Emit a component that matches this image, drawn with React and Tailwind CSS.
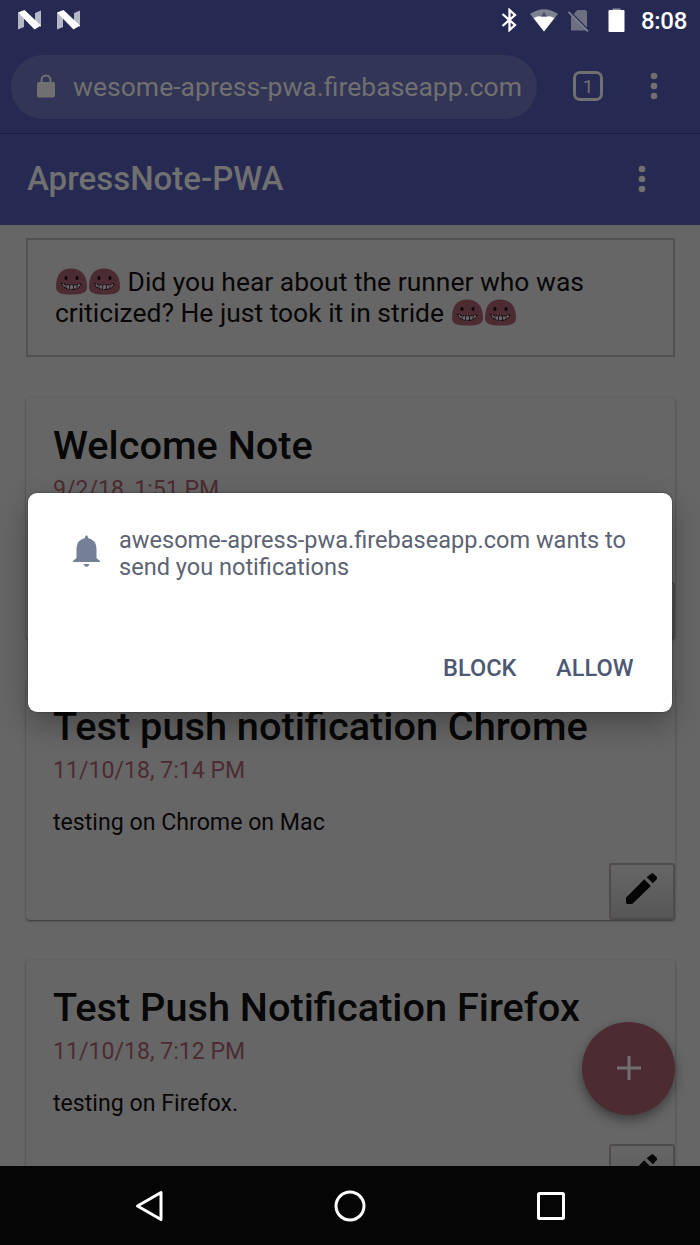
import React from "react";

function NougatIcon() {
  return (
    <svg width="25" height="20" viewBox="0 0 25 20">
      <path d="M1 2.5 L7 7.5 V17 L1 19.5 Z M24 0.5 V17 L18 12 V3 Z" fill="#b4b8c6" />
      <path d="M1 2.5 L7.5 0 L24 15.5 L17.5 19.5 Z" fill="#fff" />
    </svg>
  );
}

function StatusBar() {
  return (
    <div className="flex h-10 shrink-0 items-center pl-[17px] pr-[13px] text-white">
      <div className="flex gap-[14px]">
        <NougatIcon />
        <NougatIcon />
      </div>
      <svg className="ml-auto" width="16" height="24" viewBox="0 0 16 24" fill="none" stroke="#fff" strokeWidth="2.3">
        <path d="M1.5 6 L14 17 L8.5 22 V2 L14 7 L1.5 18" />
      </svg>
      <svg className="ml-[13px]" width="28" height="23" viewBox="0 0 28 23">
        <path d="M0 5 Q14 -4.5 28 5 L14 22.5 Z" fill="#7d808e" />
        <path d="M3.500 9 Q8 6.500 11 7.500 H17 Q20 6.500 24.500 9 L14 22.5 Z" fill="#fff" />
        <path d="M11 7.500 L14 3 L17 7.500 Z" fill="#4a4d68" />
      </svg>
      <svg className="ml-[10px]" width="22" height="23" viewBox="0 0 22 23">
        <path d="M9.5 1 H17 Q19 1 19 3 V21.5 H3 V8 Z" fill="#6d7080" />
        <path d="M2 3 L21.500 22.500" stroke="#262a52" strokeWidth="2.200" />
        <path d="M0.5 3 L20 22.5" stroke="#7d808e" strokeWidth="1.800" />
      </svg>
      <svg className="ml-[18px]" width="17" height="25" viewBox="0 0 17 25">
        <path d="M4.500 0.500 H12.500 V3 H4.500 Z" fill="#8d8f9b" />
        <rect x="0.500" y="2" width="16" height="22" rx="1" fill="#fff" />
      </svg>
      <span className="ml-4 mt-[2px] w-[46px] whitespace-nowrap text-[24px] font-medium leading-7 tracking-[-0.3px]">8:08</span>
    </div>
  );
}

function Dots() {
  return (
    <svg width="8" height="28" viewBox="0 0 8 28" fill="#707070">
      <circle cx="4" cy="4" r="3.300" />
      <circle cx="4" cy="14" r="3.300" />
      <circle cx="4" cy="24" r="3.300" />
    </svg>
  );
}

function BrowserBar() {
  return (
    <div className="flex h-[94px] shrink-0 items-start border-b border-[#1b1e40] pl-[11px] pt-[15px]">
      <div className="flex h-16 w-[526px] items-center overflow-hidden rounded-full bg-[#323556] pl-[26px]">
        <svg className="mb-[3px]" width="18" height="24" viewBox="0 0 18 24">
          <path d="M4.500 10 V6 a4.500 4.500 0 0 1 9 0 V10" fill="none" stroke="#707070" strokeWidth="2" />
          <rect x="0" y="8" width="18" height="15.500" rx="1.800" fill="#707070" />
        </svg>
        <span className="ml-[18px] whitespace-nowrap text-[26.550px] leading-8">wesome-apress-pwa.firebaseapp.com</span>
      </div>
      <div className="ml-9 mt-4 flex size-[30px] items-center justify-center rounded-[7px] border-[3px] border-[#707070] text-[19px] leading-none">1</div>
      <div className="ml-[47px] mt-[17px]">
        <Dots />
      </div>
    </div>
  );
}

function AppBar() {
  return (
    <div className="flex h-[91px] shrink-0 items-center pl-[27px] pr-[54px]">
      <h1 className="mt-[-2px] whitespace-nowrap text-[33px] font-medium leading-10">ApressNote-PWA</h1>
      <div className="mb-[2px] ml-auto">
        <Dots />
      </div>
    </div>
  );
}

function Grin() {
  return (
    <svg className="inline-block align-[-4px]" width="33" height="27" viewBox="0 0 33 27">
      <path d="M1 19 C1 7 6 0.500 16 0.500 C26 0.500 32 7 32 19 C32 25 27 26.500 16 26.500 C6 26.500 1 25 1 19 Z" fill="#4c2c32" />
      <path d="M6.500 15.500 Q16.500 18.500 26.500 15.500 Q24 21.500 16.500 21.500 Q9 21.500 6.500 15.500 Z" fill="#6c666c" stroke="#140c10" strokeWidth="1.200" strokeDasharray="1.600 1" />
      <path d="M11 16.500 V21 M14.500 17 V22 M18.500 17 V22 M22 16.500 V21" stroke="#2a1a1f" strokeWidth="1" />
      <ellipse cx="11" cy="10" rx="1.500" ry="2" fill="#08060a" />
      <ellipse cx="22" cy="10" rx="1.500" ry="2" fill="#08060a" />
    </svg>
  );
}

function Note({ title, date, body }) {
  return (
    <article className="flex h-[241px] shrink-0 flex-col rounded-[4px] pl-[27px] shadow-[0_1px_3px_rgba(0,0,0,0.3),0_1px_1px_rgba(0,0,0,0.2)]">
      <h2 className="mt-[23px] whitespace-nowrap text-[39.700px] font-medium leading-[50px] text-[#070707]">{title}</h2>
      <p className="mt-[5px] whitespace-nowrap text-[23.100px] leading-7 text-[#4c2c32]">{date}</p>
      <p className="mt-[24px] whitespace-nowrap text-[23.150px] leading-7 text-[#090708]">{body}</p>
      <div className="mt-auto flex h-[57px] w-[66px] items-center justify-center self-end rounded-[3px] border-2 border-[#4f4a4b] bg-linear-to-b from-[#666666] to-[#575757]">
        <svg className="mb-[7px] mr-px" width="31" height="31" viewBox="3 3 18 18" fill="#050505">
          <path d="M3 17.300 V20.200 Q3 21 3.800 21 H6.600 L17.400 10.600 L13.600 6.600 Z M17.400 3.600 Q18.400 2.800 19.200 3.600 L20.800 5.200 Q21.400 5.900 20.800 6.700 L18.600 9 L15 5.400 Z" />
        </svg>
      </div>
    </article>
  );
}

function Page() {
  return (
    <main className="relative flex h-[941px] shrink-0 flex-col gap-10 overflow-hidden bg-[#666666] pl-[26px] pr-[25px] pt-[13px]">
      <section className="mb-px h-[119px] shrink-0 whitespace-nowrap border-2 border-[#515151] pl-[27px] pt-[26px] text-[26.450px] leading-[31px] text-[#080607]">
        <div className="h-[31px]"><Grin /><Grin /> Did you hear about the runner who was</div>
        <div className="h-[31px]">criticized? He just took it in stride <Grin /><Grin /></div>
      </section>
      <Note title="Welcome Note" date="9/2/18, 1:51 PM" body="" />
      <Note title="Test push notification Chrome" date="11/10/18, 7:14 PM" body="testing on Chrome on Mac" />
      <Note title="Test Push Notification Firefox" date="11/10/18, 7:12 PM" body="testing on Firefox." />
      <button className="absolute left-[582px] top-[797px] flex size-[93px] items-center justify-center rounded-full bg-[#4c2c32] shadow-[0_5px_12px_rgba(0,0,0,0.4)]">
        <svg className="mb-[2px]" width="24" height="24" viewBox="0 0 24 24" stroke="#707070" strokeWidth="3">
          <path d="M12 0 V24 M0 12 H24" />
        </svg>
      </button>
    </main>
  );
}

function PermissionDialog() {
  return (
    <div className="absolute left-[28px] top-[493px] flex h-[219px] w-[644px] flex-col rounded-[9px] bg-white shadow-[0_12px_30px_rgba(0,0,0,0.3),0_0_2px_rgba(0,0,0,0.5)]">
      <div className="flex pl-[45px] pt-[33px]">
        <svg className="mt-[9px]" width="27" height="32" viewBox="0 0 27 32" fill="#758096">
          <path d="M12 2 Q13.500 -1.500 15 2 V3 Q23 5 23.500 13 V23 L27 26 V27 H0 V26 L3.500 23 V13 Q4 5 12 3 Z M10.500 29 H16.500 Q15.500 32 13.500 32 Q11.500 32 10.500 29 Z" />
        </svg>
        <p className="ml-[19px] mt-px whitespace-nowrap text-[23.550px] leading-[27px] text-[#5c6373]">
          awesome-apress-pwa.firebaseapp.com wants to<br />send you notifications
        </p>
      </div>
      <div className="mb-[30px] ml-[415px] mt-auto flex whitespace-nowrap text-[23.600px] font-medium leading-7 text-[#4d5874]">
        <span className="w-[113px]">BLOCK</span>
        <span>ALLOW</span>
      </div>
    </div>
  );
}

function NavBar() {
  return (
    <nav className="flex h-[79px] shrink-0 items-center bg-[#050505]">
      <svg className="ml-[135px]" width="29" height="32" viewBox="0 0 29 32" fill="none" stroke="#fff" strokeWidth="3" strokeLinejoin="round">
        <path d="M26 2.500 V29.500 L2.500 16 Z" />
      </svg>
      <svg className="ml-[170px]" width="32" height="32" viewBox="0 0 32 32" fill="none" stroke="#fff" strokeWidth="3">
        <circle cx="16" cy="16" r="14" />
      </svg>
      <svg className="ml-[171px]" width="28" height="28" viewBox="0 0 28 28" fill="none" stroke="#fff" strokeWidth="3">
        <rect x="1.500" y="1.500" width="25" height="25" rx="1" />
      </svg>
    </nav>
  );
}

export default function App() {
  return (
    <div className="relative flex h-[1245px] w-[700px] flex-col overflow-hidden bg-[#262a52] font-['Roboto',sans-serif] text-[#707070]">
      <StatusBar />
      <BrowserBar />
      <AppBar />
      <Page />
      <NavBar />
      <PermissionDialog />
    </div>
  );
}
